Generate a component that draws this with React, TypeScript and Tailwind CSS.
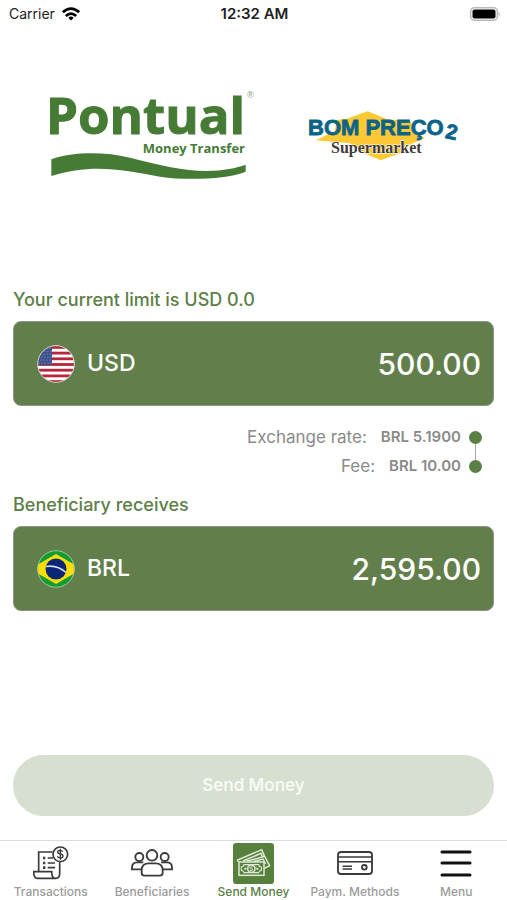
import React, { useState } from "react";

const PontualLogo = () => (
  <svg width="214" height="115" viewBox="-4 -10 214 115" role="img" aria-label="Pontual Money Transfer">
    <g fill="#457b34" fontFamily="'Open Sans', 'Noto Sans', sans-serif" fontWeight="700">
      <text x="-2" y="46" fontSize="51" stroke="#457b34" strokeWidth="1">
        Pontual
      </text>
      <text x="197" y="65" fontSize="13" textAnchor="end">
        Money Transfer
      </text>
    </g>
    <text x="199" y="10" fontSize="9" fill="#7c9a72" fontFamily="'Liberation Sans', sans-serif">
      ®
    </text>
    <path
      transform="translate(-8 -8) scale(0.3333)"
      fill="#457b34"
      d="M34 238C100 215 190 215 270 233C360 255 430 273 500 273C550 272 590 264 617 254V275C560 298 440 302 360 290C250 268 150 250 34 288Z"
    />
  </svg>
);

const BomPrecoLogo = () => (
  <svg width="156" height="54" viewBox="0 0 156 54" role="img" aria-label="Bom Preço 2 Supermarket">
    <path
      transform="translate(-7 -13) scale(0.3333)"
      fill="#fcc935"
      d="M203 46L262 70L330 76L350 112L375 126L320 150L300 172L242 193L200 175L150 142L48 133L105 104L110 72L140 68Z"
    />
    <g
      fill="#0b6488"
      stroke="#0b6488"
      strokeWidth="0.8"
      fontFamily="'Liberation Sans', Arial, sans-serif"
      fontWeight="700"
    >
      <text x="1" y="26" fontSize="22">
        BOM PREÇO
      </text>
      <text x="139" y="30" fontSize="21" transform="rotate(12 144 22)">
        2
      </text>
    </g>
    <text
      x="24"
      y="44"
      fontSize="16"
      fontWeight="700"
      fill="#3f3b3c"
      stroke="#ffffff"
      strokeWidth="1"
      paintOrder="stroke"
      fontFamily="'Liberation Serif', serif"
    >
      Supermarket
    </text>
  </svg>
);

const UsFlag = () => (
  <svg width="38" height="38" viewBox="0 0 38 38" aria-hidden="true">
    <clipPath id="us">
      <circle cx="19" cy="19" r="18.500" />
    </clipPath>
    <g clipPath="url(#us)">
      <rect width="38" height="38" fill="#ffffff" />
      {[1, 6.7, 12.4, 18.1, 23.8, 29.5, 35.2].map((y) => (
        <rect key={y} y={y} width="38" height="2.8" fill="#b8253c" />
      ))}
      <rect width="15" height="20" fill="#3a4f8c" />
      {[3, 6, 9, 12, 15, 18].map((y, row) =>
        [1, 4, 7, 10, 13].map((x) => (
          <circle key={`${x}-${y}`} cx={x + (row % 2)} cy={y} r="0.6" fill="#a9b5d6" />
        ))
      )}
    </g>
    <circle cx="19" cy="19" r="18.300" fill="none" stroke="#c5d0bd" strokeWidth="1" />
  </svg>
);

const BrazilFlag = () => (
  <svg width="38" height="38" viewBox="0 0 38 38" aria-hidden="true">
    <clipPath id="br">
      <circle cx="19" cy="19" r="18.500" />
    </clipPath>
    <g clipPath="url(#br)">
      <rect width="38" height="38" fill="#129b34" />
      <path d="M-7 19L19 4L45 19L19 34Z" fill="#fedf00" />
    </g>
    <circle cx="19" cy="19" r="10.500" fill="#0b2577" />
    <path d="M9 16.500Q20 14.500 29 22.500" fill="none" stroke="#d5dff0" strokeWidth="1.600" />
    <circle cx="19" cy="19" r="18.300" fill="none" stroke="#9fc59a" strokeWidth="1" />
  </svg>
);

const WifiIcon = () => (
  <svg width="18" height="14" viewBox="0 0 18 14" fill="none" stroke="#000000" strokeWidth="2.700" aria-hidden="true">
    <path d="M0.800 5.200Q9 -2 17.200 5.200" />
    <path d="M3.800 8.900Q9 4.300 14.200 8.900" />
    <path d="M6.300 10.700Q9 8.500 11.700 10.700L9 13.600Z" fill="#000000" stroke="none" />
  </svg>
);

const BatteryIcon = () => (
  <svg width="30" height="14" viewBox="0 0 30 14" aria-hidden="true">
    <rect x="0.700" y="0.700" width="26.600" height="12.600" rx="3.500" fill="#ffffff" stroke="#b9b9b9" strokeWidth="1.400" />
    <rect x="2.500" y="2.500" width="23" height="9" rx="2" fill="#000000" />
    <path d="M28.500 5V9Q30 8.500 30 7Q30 5.500 28.500 5Z" fill="#b9b9b9" />
  </svg>
);

const TransactionsIcon = () => (
  <svg width="36" height="34" viewBox="101 35 108 102" fill="none" stroke="#3a3a3a" strokeWidth="5" aria-hidden="true">
    <path d="M160 53H118V112M181 84V119Q181 132 169 132H115Q103 132 103 112H157Q157 132 169 132" />
    <circle cx="183" cy="60" r="22" />
    <path d="M190 52Q188 48 182 48Q175 48 175 53Q175 58 183 59Q191 60 191 66Q191 71 183 71Q176 71 174 66M183 43V76" strokeWidth="4" />
    <path d="M145 71H161M145 86H167M145 100H167" />
    <path d="M131 71H138M131 86H138M131 100H138" strokeWidth="8" />
  </svg>
);

const BeneficiariesIcon = () => (
  <svg width="42" height="28" viewBox="396 43 126 84" fill="none" stroke="#3a3a3a" strokeWidth="5.500" aria-hidden="true">
    <circle cx="459" cy="62" r="16" />
    <path d="M428 106Q428 86 450 86H469Q491 86 491 106V115Q491 123 482 123H437Q428 123 428 115Z" />
    <circle cx="421" cy="67" r="12" />
    <circle cx="497" cy="67" r="12" />
    <path d="M427 104H399V98Q399 84 414 83H433M491 104H519V98Q519 84 505 83H486" />
  </svg>
);

const SendMoneyIcon = () => (
  <svg width="41" height="41" viewBox="102 22 123 123" fill="none" stroke="#dfe9d6" strokeWidth="4.500" aria-hidden="true">
    <rect x="102" y="22" width="123" height="123" rx="10" fill="#56803c" stroke="none" />
    <path d="M116 78V73L188 42L196 60M132 76L186 53L190 62M143 77L197 62L212 90L196 98M164 77L192 70L200 85" />
    <rect x="120" y="79" width="75" height="40" />
    <path d="M135 87H179Q180 93 187 94V104Q180 105 179 111H135Q134 105 127 104V94Q134 93 135 87Z" strokeWidth="3.500" />
    <circle cx="157" cy="99" r="11" />
    <path d="M161 94Q153 92 153 96Q153 99 157 99Q162 100 161 103Q159 106 152 104" strokeWidth="3" />
    <path d="M136 99H142M172 99H178" strokeWidth="6" />
  </svg>
);

const CardIcon = () => (
  <svg width="36" height="24" viewBox="410 48 108 72" fill="none" stroke="#3a3a3a" strokeWidth="5.500" aria-hidden="true">
    <rect x="413" y="51" width="102" height="66" rx="9" />
    <path d="M413 66H515M413 80H515M427 94H455M427 102H455" strokeWidth="4.500" />
    <circle cx="492" cy="97" r="7" />
  </svg>
);

const MenuIcon = () => (
  <svg width="32" height="28" viewBox="0 0 32 28" stroke="#111111" strokeWidth="3" strokeLinecap="round" aria-hidden="true">
    <path d="M2 3H30M2 14H30M2 26H30" />
  </svg>
);

const tabs = [
  { name: "Transactions", icon: <TransactionsIcon /> },
  { name: "Beneficiaries", icon: <BeneficiariesIcon /> },
  { name: "Send Money", icon: <SendMoneyIcon /> },
  { name: "Paym. Methods", icon: <CardIcon /> },
  { name: "Menu", icon: <MenuIcon /> },
];

interface AmountBoxProps {
  id: string;
  currency: string;
  flag: React.ReactNode;
  value: string;
  onChange?: (value: string) => void;
}

const AmountBox = ({ id, currency, flag, value, onChange }: AmountBoxProps) => (
  <div className="flex items-center gap-3 rounded-lg border border-[#8b9485] bg-[#627f4b] py-5 pl-[23px] pr-3 text-white">
    <label htmlFor={id} className="flex items-center gap-3 text-[23px] font-medium">
      {flag}
      {currency}
    </label>
    <input
      id={id}
      type="text"
      inputMode="decimal"
      value={value}
      readOnly={!onChange}
      onChange={(event) => onChange?.(event.target.value)}
      className="h-[43px] min-w-0 flex-1 bg-transparent text-right text-3xl font-medium outline-none"
    />
  </div>
);

const App = () => {
  const [amount, setAmount] = useState("500.00");
  const [activeTab, setActiveTab] = useState("Send Money");

  return (
    <div className="flex min-h-screen flex-col bg-white font-['Inter',sans-serif]">
      <header className="grid h-7 grid-cols-3 items-center pl-[9px] pr-[7px] text-sm text-[#222222]">
        <div className="flex items-center gap-[7px]">
          Carrier <WifiIcon />
        </div>
        <span className="text-center text-[15px] font-semibold">12:32 AM</span>
        <div className="flex justify-end">
          <BatteryIcon />
        </div>
      </header>

      <div className="flex items-center justify-between px-11 pt-[50px]">
        <PontualLogo />
        <BomPrecoLogo />
      </div>

      <main className="flex flex-1 flex-col px-[13px] pb-6 pt-[95px]">
        <p className="mb-[9px] text-lg leading-6 font-medium text-[#5c8046]">Your current limit is USD 0.0</p>
        <AmountBox id="send" currency="USD" flag={<UsFlag />} value={amount} onChange={setAmount} />

        <div className="mt-[17px] mb-3 flex justify-end gap-2 pr-3 text-[#8a8a8a]">
          <dl>
            <div className="flex h-[29px] items-center justify-end gap-[14px]">
              <dt className="text-[17px]">Exchange rate:</dt>
              <dd className="text-[15px] font-semibold">BRL 5.1900</dd>
            </div>
            <div className="flex h-[29px] items-center justify-end gap-[14px]">
              <dt className="text-[17px]">Fee:</dt>
              <dd className="text-[15px] font-semibold">BRL 10.00</dd>
            </div>
          </dl>
          <div className="flex flex-col items-center py-2">
            <span className="size-[13px] rounded-full bg-[#5b7f45]" />
            <span className="w-px flex-1 bg-[#a5aaa2]" />
            <span className="size-[13px] rounded-full bg-[#5b7f45]" />
          </div>
        </div>

        <p className="mb-[9px] text-lg leading-6 font-medium text-[#5c8046]">Beneficiary receives</p>
        <AmountBox id="receive" currency="BRL" flag={<BrazilFlag />} value="2,595.00" />

        <button
          type="button"
          disabled
          className="mt-auto h-[61px] w-full rounded-full bg-[#d6dfd0] text-[17px] font-semibold text-[#f7faf5]"
        >
          Send Money
        </button>
      </main>

      <nav className="grid grid-cols-5 border-t border-[#dcdcdc] pt-px">
        {tabs.map((tab) => (
          <button
            key={tab.name}
            type="button"
            onClick={() => setActiveTab(tab.name)}
            className={`flex flex-col items-center whitespace-nowrap text-xs leading-4 font-medium ${
              activeTab === tab.name ? "text-[#5b7f45]" : "text-[#9b9b9b]"
            }`}
          >
            <span className="flex h-[42px] items-center">{tab.icon}</span>
            {tab.name}
          </button>
        ))}
      </nav>
    </div>
  );
};

export default App;
